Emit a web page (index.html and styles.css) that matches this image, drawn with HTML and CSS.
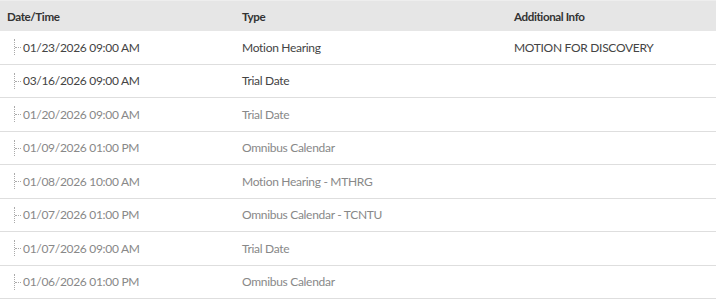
FILE: index.html
```html
<!DOCTYPE html>
<html>
<head>
<meta charset="utf-8">
<link rel="stylesheet" href="styles.css">
</head>
<body>
<div class="grid">
  <div class="head">
    <div class="c c-date">Date/Time</div>
    <div class="c c-type">Type</div>
    <div class="c c-info">Additional Info</div>
  </div>
  <div class="row dark">
    <div class="c c-date"><span class="tree"></span>01/23/2026 09:00 AM</div>
    <div class="c c-type">Motion Hearing</div>
    <div class="c c-info">MOTION FOR DISCOVERY</div>
  </div>
  <div class="row dark">
    <div class="c c-date"><span class="tree"></span>03/16/2026 09:00 AM</div>
    <div class="c c-type">Trial Date</div>
    <div class="c c-info"></div>
  </div>
  <div class="row">
    <div class="c c-date"><span class="tree"></span>01/20/2026 09:00 AM</div>
    <div class="c c-type">Trial Date</div>
    <div class="c c-info"></div>
  </div>
  <div class="row">
    <div class="c c-date"><span class="tree"></span>01/09/2026 01:00 PM</div>
    <div class="c c-type">Omnibus Calendar</div>
    <div class="c c-info"></div>
  </div>
  <div class="row">
    <div class="c c-date"><span class="tree"></span>01/08/2026 10:00 AM</div>
    <div class="c c-type">Motion Hearing - MTHRG</div>
    <div class="c c-info"></div>
  </div>
  <div class="row">
    <div class="c c-date"><span class="tree"></span>01/07/2026 01:00 PM</div>
    <div class="c c-type">Omnibus Calendar - TCNTU</div>
    <div class="c c-info"></div>
  </div>
  <div class="row">
    <div class="c c-date"><span class="tree"></span>01/07/2026 09:00 AM</div>
    <div class="c c-type">Trial Date</div>
    <div class="c c-info"></div>
  </div>
  <div class="row">
    <div class="c c-date"><span class="tree"></span>01/06/2026 01:00 PM</div>
    <div class="c c-type">Omnibus Calendar</div>
    <div class="c c-info"></div>
  </div>
</div>
</body>
</html>
```

FILE: styles.css
```css
html, body {
  margin: 0;
  padding: 0;
  background: #ffffff;
}
body {
  font-family: Lato, "Open Sans", "Liberation Sans", sans-serif;
  font-size: 12px;
  letter-spacing: -0.3px;
  color: #888;
  overflow: hidden;
}
.grid {
  width: 716px;
}
.head, .row {
  display: grid;
  grid-template-columns: 235px 272px 1fr;
  align-items: center;
}
.head {
  height: 30px;
  background: #e6e6e6;
  border-top: 1px solid #eeeeee;
  color: #333;
  font-weight: 700;
  font-size: 11.6px;
  letter-spacing: -0.4px;
}
.row {
  height: 32.5px;
  border-bottom: 1px solid #dedede;
}
.head .c-date { padding-left: 7px; }
.c-type { padding-left: 7px; }
.c-info { padding-left: 7px; }
.row .c-date {
  display: flex;
  align-items: center;
  padding-left: 14px;
}
.row.dark { color: #444; }
.tree {
  position: relative;
  width: 8px;
  height: 16px;
  border-left: 1px dotted #aaa;
  flex: none;
}
.tree::after {
  content: "";
  position: absolute;
  left: 0;
  top: 8px;
  width: 6px;
  border-top: 1px dotted #aaa;
}
```
